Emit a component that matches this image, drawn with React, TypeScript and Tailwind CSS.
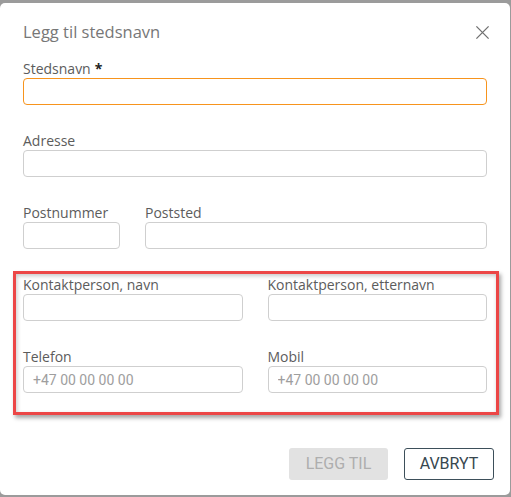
import React from "react";

const labelCls = "block text-[14px] leading-[18px] text-[#5c5c5c] font-['Open_Sans',sans-serif]";
const inputCls =
  "block w-full h-[27px] rounded-[4px] border border-[#cfcfcf] bg-white px-[9px] text-[14px] text-[#444] placeholder:text-[#9e9e9e] font-['Roboto',sans-serif] outline-none";

function Field({ label, required, placeholder, focused }: {
  label: string;
  required?: boolean;
  placeholder?: string;
  focused?: boolean;
}) {
  return (
    <div className="flex flex-col">
      <label className={labelCls}>
        {label}
        {required && <span className="ml-[4px] font-bold text-[#222]">*</span>}
      </label>
      <input
        className={inputCls + (focused ? " !border-[#f7941d]" : "")}
        placeholder={placeholder}
      />
    </div>
  );
}

export default function App() {
  return (
    <div className="w-[511px] h-[497px] bg-[#9b9b9b] pt-[3px] pb-[2px] pr-[1px] overflow-hidden">
      <div className="h-full rounded-[5px] bg-white flex flex-col">
        <div className="flex items-center justify-between pl-[23px] pr-[20px] pt-[18px] h-[40px]">
          <h2 className="text-[16.5px] text-[#777] font-['Open_Sans',sans-serif]">Legg til stedsnavn</h2>
          <svg width="15" height="15" viewBox="0 0 16 16" className="text-[#707070]">
            <path d="M1.5 1.5 L14.5 14.5 M14.5 1.5 L1.5 14.5" stroke="currentColor" strokeWidth="1.4" fill="none" />
          </svg>
        </div>

        <div className="pl-[23px] pr-[23px] pt-[17px] flex flex-col gap-[27px]">
          <Field label="Stedsnavn" required focused />
          <Field label="Adresse" />
          <div className="flex gap-[25px]">
            <div className="w-[97px]">
              <Field label="Postnummer" />
            </div>
            <div className="flex-1">
              <Field label="Poststed" />
            </div>
          </div>
        </div>

        <div className="ml-[13px] mr-[11px] mt-[22px] pl-[7px] pr-[9px] pt-[2px] pb-[19px] border-[3px] border-[#ec4646] shadow-[2px_3px_4px_rgba(0,0,0,0.35),inset_1px_2px_4px_rgba(0,0,0,0.22)]">
          <div className="grid grid-cols-2 gap-x-[25px] gap-y-[27px]">
            <Field label="Kontaktperson, navn" />
            <Field label="Kontaktperson, etternavn" />
            <Field label="Telefon" placeholder="+47 00 00 00 00" />
            <Field label="Mobil" placeholder="+47 00 00 00 00" />
          </div>
        </div>

        <div className="flex justify-end gap-[16px] pr-[16px] mt-[33px]">
          <button className="w-[99px] h-[32px] rounded-[3px] bg-[#e2e2e2] text-[#aeaeae] text-[16px] font-['Roboto',sans-serif]">
            LEGG TIL
          </button>
          <button className="w-[90px] h-[32px] rounded-[3px] border border-[#3d4f5a] bg-white text-[#37474f] text-[16px] font-['Roboto',sans-serif]">
            AVBRYT
          </button>
        </div>
      </div>
    </div>
  );
}
